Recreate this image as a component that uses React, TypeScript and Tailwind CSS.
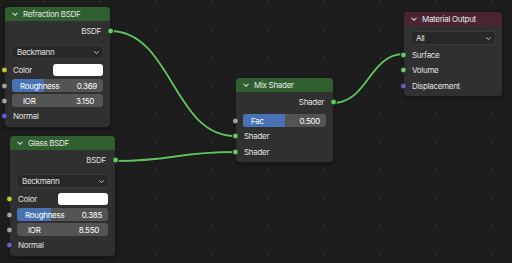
import React from "react";

const font = { fontFamily: "Inter, 'Noto Sans', sans-serif" };

const Socket = ({ side, color }: { side: "left" | "right"; color: string }) => (
  <span
    className={`absolute top-1/2 -translate-y-1/2 w-[7px] h-[7px] rounded-full border border-[#1a1a1a] ${
      side === "left" ? "left-[-4px]" : "right-[-4px]"
    } ${color}`}
  />
);

const Chevron = ({ className }: { className: string }) => (
  <svg className={className} viewBox="0 0 8 8" fill="none" stroke="currentColor" strokeWidth={1.1}>
    <path d="M1.5 2.8 4 5.2 6.5 2.8" />
  </svg>
);

const Node = ({
  className,
  title,
  header,
  children,
}: {
  className: string;
  title: string;
  header: string;
  children: React.ReactNode;
}) => (
  <div className={`absolute rounded-[4px] bg-[#303030] shadow-[0_0_0_1px_#1a1a1a,0_2px_4px_rgba(0,0,0,0.5)] ${className}`}>
    <div className={`h-[14px] rounded-t-[4px] flex items-center pl-[6px] text-[8px] tracking-[-0.3px] text-[#e6e6e6] ${header}`}>
      <Chevron className="w-[8px] h-[8px] mr-[4px] text-[#d0d0d0]" />
      {title}
    </div>
    {children}
  </div>
);

const Output = ({ label }: { label: string }) => (
  <div className="relative h-[16px] mt-[2px] flex items-center justify-end pr-[9px] text-[8px] tracking-[-0.3px] text-[#e0e0e0]">
    {label}
    <Socket side="right" color="bg-[#63c763]" />
  </div>
);

const Dropdown = ({ label, className }: { label: string; className: string }) => (
  <div
    className={`mx-[7px] h-[12px] rounded-[3px] bg-[#282828] shadow-[0_0_0_1px_#3a3a3a] flex items-center justify-between pl-[5px] pr-[3px] text-[8px] tracking-[-0.3px] text-[#e0e0e0] ${className}`}
  >
    {label}
    <Chevron className="w-[7px] h-[7px] text-[#cfcfcf]" />
  </div>
);

const Input = ({
  label,
  color,
  className,
  swatch,
}: {
  label: string;
  color: string;
  className: string;
  swatch?: boolean;
}) => (
  <div className={`relative h-[14px] flex items-center pl-[8px] pr-[7px] text-[8px] tracking-[-0.3px] text-[#e0e0e0] ${className}`}>
    <span className="flex-1">{label}</span>
    {swatch && <span className="w-[50px] h-[12px] rounded-[3px] bg-white" />}
    <Socket side="left" color={color} />
  </div>
);

const Slider = ({
  label,
  value,
  fill,
  className,
  labelPad,
  valuePad,
}: {
  label: string;
  value: string;
  fill: number;
  className: string;
  labelPad: string;
  valuePad: string;
}) => (
  <div className={`relative ${className}`}>
    <div className="relative mx-[7px] h-[13px] rounded-[3px] bg-[#545454] overflow-hidden text-[8px] tracking-[-0.3px] text-white">
      <div className="absolute left-0 top-0 bottom-0 bg-[#4772b3]" style={{ width: `${fill * 100}%` }} />
      <div className={`relative h-full flex items-center justify-between ${labelPad} ${valuePad}`}>
        <span>{label}</span>
        <span>{value}</span>
      </div>
    </div>
    <Socket side="left" color="bg-[#a1a1a1]" />
  </div>
);

const BsdfBody = ({ rough, roughFill, ior }: { rough: string; roughFill: number; ior: string }) => (
  <div className="pb-[4px]">
    <Output label="BSDF" />
    <Dropdown label="Beckmann" className="mt-[7px]" />
    <Input label="Color" color="bg-[#c7c729]" className="mt-[5px]" swatch />
    <Slider label="Roughness" value={rough} fill={roughFill} className="mt-[2px]" labelPad="pl-[8px]" valuePad="pr-[6px]" />
    <Slider label="IOR" value={ior} fill={0} className="mt-[2px]" labelPad="pl-[11px]" valuePad="pr-[9px]" />
    <Input label="Normal" color="bg-[#6363c7]" className="mt-[2px]" />
  </div>
);

export default function App() {
  return (
    <div className="relative w-[512px] h-[263px] overflow-hidden bg-[#1d1d1d]" style={font}>
      <svg className="absolute inset-0" width={512} height={263}>
        <defs>
          <pattern id="dots" width={28} height={28} patternUnits="userSpaceOnUse">
            <rect x={15} y={1} width={2} height={2} fill="#2c2c2c" />
          </pattern>
        </defs>
        <rect width={512} height={263} fill="url(#dots)" />
        {[
          "M110 31 C172 31 173 136 235 136",
          "M115 161 C175 161 175 152 235 152",
          "M333 103 C368 103 369 54 404 54",
        ].map((d) => (
          <g key={d} fill="none">
            <path d={d} stroke="#161616" strokeWidth={3.6} />
            <path d={d} stroke="#5dc15d" strokeWidth={2} />
          </g>
        ))}
      </svg>

      <Node className="left-[5px] top-[7px] w-[105px]" title="Refraction BSDF" header="bg-[#2f5f2f]">
        <BsdfBody rough="0.369" roughFill={0.35} ior="3.150" />
      </Node>

      <Node className="left-[10px] top-[136px] w-[105px]" title="Glass BSDF" header="bg-[#2f5f2f]">
        <BsdfBody rough="0.385" roughFill={0.37} ior="8.550" />
      </Node>

      <Node className="left-[236px] top-[78px] w-[97px]" title="Mix Shader" header="bg-[#2f5f2f]">
        <div className="pb-[3px]">
          <Output label="Shader" />
          <Slider label="Fac" value="0.500" fill={0.5} className="mt-[4px]" labelPad="pl-[8px]" valuePad="pr-[6px]" />
          <Input label="Shader" color="bg-[#63c763]" className="mt-[2px]" />
          <Input label="Shader" color="bg-[#63c763]" className="mt-[2px]" />
        </div>
      </Node>

      <Node className="left-[404px] top-[12px] w-[98px]" title="Material Output" header="bg-[#4a2430]">
        <div className="pb-[3px]">
          <Dropdown label="All" className="mt-[6px]" />
          <Input label="Surface" color="bg-[#63c763]" className="mt-[4px]" />
          <Input label="Volume" color="bg-[#63c763]" className="mt-[1px]" />
          <Input label="Displacement" color="bg-[#6363c7]" className="mt-[2px]" />
        </div>
      </Node>
    </div>
  );
}
